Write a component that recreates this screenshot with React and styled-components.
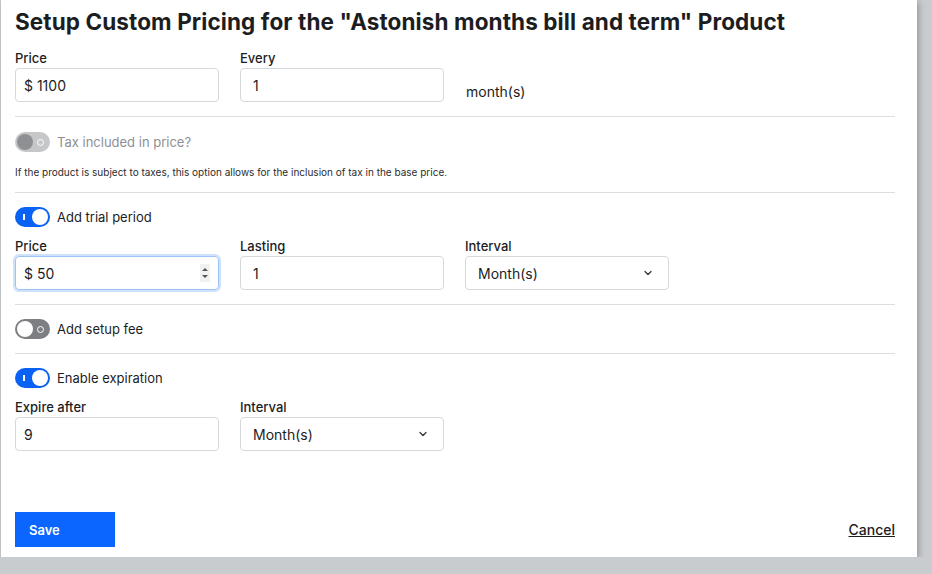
import React from 'react';
import styled, { createGlobalStyle } from 'styled-components';

const Global = createGlobalStyle`
  html, body { margin: 0; background: #c9cccf; }
  body { font-family: Inter, "Liberation Sans", sans-serif; color: #1c1d1f; }
`;

const Panel = styled.div`
  width: 916px;
  height: 557px;
  margin-left: 1px;
  background: #fff;
  box-shadow: 2px 2px 6px rgba(0,0,0,0.25);
  box-sizing: border-box;
  padding: 8px 22px 0 14px;
  display: flex;
  flex-direction: column;
`;

const Title = styled.h1`
  font-size: 22.5px;
  font-weight: 700;
  margin: 0 0 15px;
  letter-spacing: 0.1px;
  line-height: 28px;
  white-space: nowrap;
`;

const Row = styled.div`
  display: flex;
  gap: 21px;
  align-items: flex-end;
`;

const Field = styled.div`
  display: flex;
  flex-direction: column;
  width: 204px;
`;

const Label = styled.label`
  font-size: 13px;
  font-weight: 500;
  margin-bottom: 2px;
  line-height: 15px;
`;

const Input = styled.div`
  height: 34px;
  box-sizing: border-box;
  border: 1px solid ${p => (p.$focus ? '#9cc3f5' : '#d6d8db')};
  box-shadow: ${p => (p.$focus ? '0 0 0 2px #cfe2fb' : 'none')};
  border-radius: 4px;
  padding: 0 ${p => (p.$select ? 14 : 8)}px 0 ${p => (p.$pad || 8)}px;
  display: flex;
  align-items: center;
  justify-content: space-between;
  font-size: 14px;
`;

const Suffix = styled.span`
  font-size: 14px;
  margin-left: 1px;
  padding-bottom: 2px;
`;

const Divider = styled.hr`
  border: none;
  border-top: 1px solid #dcdee0;
  margin: ${p => p.$m || '14px 0'};
  width: 880px;
`;

const ToggleRow = styled.div`
  display: flex;
  align-items: center;
  gap: 7px;
  font-size: 13px;
  color: ${p => (p.$disabled ? '#8d9094' : '#1c1d1f')};
`;

const Track = styled.div`
  width: 35px;
  height: 20px;
  border-radius: 10px;
  background: ${p => (p.$on ? '#0a62f5' : p.$disabled ? '#c6c7c9' : '#7c7e82')};
  position: relative;
  box-sizing: border-box;
`;

const Knob = styled.div`
  position: absolute;
  top: 2px;
  left: ${p => (p.$on ? '17px' : '2px')};
  width: 16px;
  height: 16px;
  border-radius: 50%;
  background: ${p => (p.$disabled ? '#8e9093' : '#fff')};
`;

const Mark = styled.div`
  position: absolute;
  top: 7px;
  ${p => (p.$on ? 'left: 8px; width: 1.5px; height: 6px; background: #fff;' :
    'right: 6px; width: 5px; height: 5px; border: 1px solid #fff; border-radius: 50%; top: 6.5px;')}
`;

const Help = styled.p`
  font-size: 10px;
  color: #2b2c2e;
  margin: 14px 0 0;
  line-height: 12px;
`;

const Footer = styled.div`
  margin-top: auto;
  margin-bottom: 10px;
  display: flex;
  justify-content: space-between;
  align-items: center;
  width: 880px;
`;

const Save = styled.button`
  width: 100px;
  height: 35px;
  background: #0a66ff;
  color: #fff;
  border: none;
  font: 600 13px Inter, "Liberation Sans", sans-serif;
  text-align: left;
  padding-left: 14px;
`;

const Cancel = styled.a`
  font-size: 14px;
  font-weight: 500;
  color: #1c1d1f;
  text-decoration: underline;
`;

const Toggle = ({ on, disabled, children }) => (
  <ToggleRow $disabled={disabled}>
    <Track $on={on} $disabled={disabled}>
      <Mark $on={on} />
      <Knob $on={on} $disabled={disabled} />
    </Track>
    {children}
  </ToggleRow>
);

const Chevron = () => (
  <svg width="12" height="12" viewBox="0 0 24 24" fill="none" stroke="#333" strokeWidth="2.5" strokeLinecap="round" strokeLinejoin="round">
    <path d="M6 9l6 6 6-6" />
  </svg>
);

const Spinner = () => (
  <svg width="10" height="18" viewBox="0 0 10 18">
    <rect width="10" height="18" fill="#f1f1f2" />
    <path d="M2 7l3-3 3 3z M2 11l3 3 3-3z" fill="#555" />
  </svg>
);

export default function App() {
  return (
    <>
      <Global />
      <Panel>
        <Title>Setup Custom Pricing for the "Astonish months bill and term" Product</Title>
        <Row>
          <Field><Label>Price</Label><Input>$ 1100</Input></Field>
          <Field><Label>Every</Label><Input $pad={12}>1</Input></Field>
          <Suffix>month(s)</Suffix>
        </Row>
        <Divider $m="14px 0 15px" />
        <Toggle disabled>Tax included in price?</Toggle>
        <Help>If the product is subject to taxes, this option allows for the inclusion of tax in the base price.</Help>
        <Divider $m="14px 0 14px" />
        <Toggle on>Add trial period</Toggle>
        <Row style={{ marginTop: 12 }}>
          <Field><Label>Price</Label><Input $focus>$ 50<Spinner /></Input></Field>
          <Field><Label>Lasting</Label><Input $pad={12}>1</Input></Field>
          <Field><Label>Interval</Label><Input $pad={12} $select>Month(s)<Chevron /></Input></Field>
        </Row>
        <Divider $m="14px 0 14px" />
        <Toggle>Add setup fee</Toggle>
        <Divider $m="14px 0 14px" />
        <Toggle on>Enable expiration</Toggle>
        <Row style={{ marginTop: 12 }}>
          <Field><Label>Expire after</Label><Input>9</Input></Field>
          <Field><Label>Interval</Label><Input $pad={12} $select>Month(s)<Chevron /></Input></Field>
        </Row>
        <Footer>
          <Save>Save</Save>
          <Cancel>Cancel</Cancel>
        </Footer>
      </Panel>
    </>
  );
}
